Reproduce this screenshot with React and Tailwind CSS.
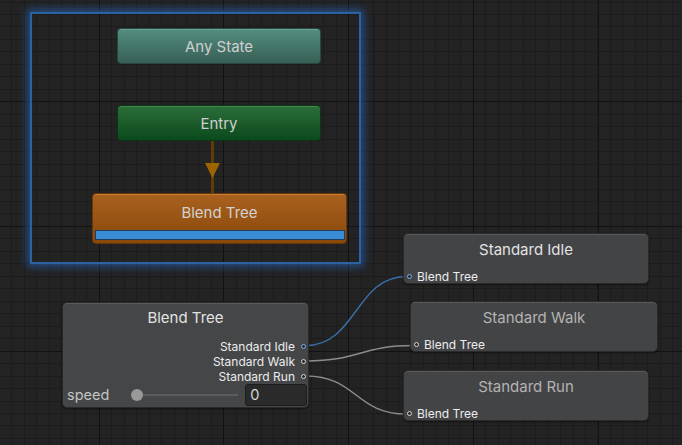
import React from 'react';

const MINOR = 12.47;
const MAJOR = 124.7;

function GridBackdrop() {
  const lines = [];
  // minor lines
  for (let x = 11.4; x < 682; x += MINOR) {
    lines.push(<rect key={`vx${x}`} x={Math.round(x)} y={0} width={1} height={445} fill="#1c1c1c" />);
  }
  for (let y = 1.5; y < 445; y += MINOR) {
    lines.push(<rect key={`hy${y}`} x={0} y={Math.round(y)} width={682} height={1} fill="#1c1c1c" />);
  }
  // major lines
  for (let x = 98.7 - MAJOR; x < 682; x += MAJOR) {
    lines.push(<rect key={`VX${x}`} x={Math.round(x)} y={0} width={1} height={445} fill="#121212" />);
  }
  for (let y = 101.3 - MAJOR; y < 445; y += MAJOR) {
    lines.push(<rect key={`HY${y}`} x={0} y={Math.round(y)} width={682} height={1} fill="#121212" />);
  }
  return (
    <svg className="absolute inset-0" width="682" height="445">
      {lines}
    </svg>
  );
}

function curve(x1, y1, x2, y2) {
  const dx = (x2 - x1) / 2;
  return `M${x1} ${y1} C${x1 + dx} ${y1} ${x2 - dx} ${y2} ${x2} ${y2}`;
}

function Wires() {
  return (
    <svg className="absolute inset-0 pointer-events-none" width="682" height="445">
      <path d={curve(306, 345.5, 406, 276.5)} stroke="#3b6ea6" strokeWidth="1.5" fill="none" />
      <path d={curve(306, 361, 414, 345.5)} stroke="#8c8c8c" strokeWidth="1.5" fill="none" />
      <path d={curve(306, 376, 406, 414)} stroke="#8c8c8c" strokeWidth="1.5" fill="none" />
    </svg>
  );
}

function Port({ blue = false }) {
  return (
    <span
      className={`block w-[5px] h-[5px] rounded-full border bg-[#2a2a2a] shrink-0 ${
        blue ? 'border-[#7fb0e6]' : 'border-[#d6d6d6]'
      }`}
    />
  );
}

function StateNode({ title, className, textClass = 'text-[#cfcfcf]' }) {
  return (
    <div
      className={`absolute flex items-center justify-center pt-[2px] rounded-[4px] text-[15px] ${textClass} ${className}`}
    >
      {title}
    </div>
  );
}

function ClipNode({ title, left, top, width, height, dim = false, blue = false }) {
  return (
    <div
      className="absolute flex flex-col rounded-[5px] bg-[#434446] border border-[#2a2a2b] shadow-[inset_0_1px_0_#58595b,0_1px_2px_rgba(0,0,0,0.5)]"
      style={{ left, top, width, height }}
    >
      <div
        className={`h-[33px] flex items-center justify-center text-[15px] ${
          dim ? 'text-[#b3b3b3]' : 'text-[#e2e2e2]'
        }`}
      >
        {title}
      </div>
      <div className="flex-1" />
      <div className="h-[13px] flex items-center gap-[5px] pl-[3px] text-[12px] text-[#ededed]">
        <Port blue={blue} />
        <span>Blend Tree</span>
      </div>
    </div>
  );
}

export default function App() {
  return (
    <div
      className="relative w-[682px] h-[445px] overflow-hidden bg-[#232323] select-none"
      style={{ fontFamily: 'Inter, "Noto Sans", "Liberation Sans", sans-serif' }}
    >
      <GridBackdrop />

      {/* selected group */}
      <div className="absolute left-[30px] top-[12px] w-[331px] h-[252px] border-2 border-[#2c62a2] shadow-[0_0_8px_3px_rgba(38,100,180,0.65)]" />

      <StateNode
        title="Any State"
        className="left-[117px] top-[28px] w-[204px] h-[36px] bg-gradient-to-b from-[#538e80] to-[#385f56] border border-[#2b4640] shadow-[inset_0_1px_0_#6aa394]"
      />
      <StateNode
        title="Entry"
        className="left-[117px] top-[105px] w-[204px] h-[36px] bg-gradient-to-b from-[#2b6e3a] to-[#0a4a1c] border border-[#0c3315] shadow-[inset_0_1px_0_#3f8a4f]"
      />

      {/* transition arrow */}
      <div className="absolute left-[211px] top-[141px] w-[3px] h-[53px] bg-[#5e3d08]" />
      <svg className="absolute left-[204px] top-[163px]" width="17" height="16">
        <polygon points="1,0 16,0 8.5,15" fill="#9b6400" />
      </svg>

      {/* orange blend tree state */}
      <div className="absolute left-[92px] top-[193px] w-[255px] h-[51px] flex flex-col rounded-[4px] bg-gradient-to-b from-[#aa611e] to-[#874809] border border-[#6a3806] shadow-[inset_0_1px_0_#c77c38]">
        <div className="h-[36px] pt-[2px] flex items-center justify-center text-[15px] text-[#d2d2d2]">
          Blend Tree
        </div>
        <div className="ml-[2px] mr-[1px] h-[10px] bg-[#3a8dd5] border border-[#1e3f60]" />
      </div>

      <Wires />

      {/* blend tree node */}
      <div className="absolute left-[62px] top-[302px] w-[247px] h-[106px] flex flex-col rounded-[5px] bg-[#454648] border border-[#2a2a2b] shadow-[inset_0_1px_0_#5a5b5d,0_1px_2px_rgba(0,0,0,0.5)]">
        <div className="h-[31px] flex items-center justify-center text-[15px] text-[#e2e2e2]">
          Blend Tree
        </div>
        <div className="mt-[5px] flex flex-col items-end pr-[2px] text-[12px] text-[#ececec] leading-[15px]">
          {[
            ['Standard Idle', true],
            ['Standard Walk', false],
            ['Standard Run', false],
          ].map(([label, blue]) => (
            <div key={label} className="flex items-center gap-[6px] h-[15px]">
              <span>{label}</span>
              <Port blue={blue} />
            </div>
          ))}
        </div>
        <div className="h-[22px] flex items-center pl-[4px] pr-[1px]">
          <span className="w-[66px] text-[14.5px] text-[#c4c4c4]">speed</span>
          <div className="relative w-[106px] h-[2px] bg-[#5c5c5c]">
            <span className="absolute left-[-2px] top-[-5px] w-[12px] h-[12px] rounded-full bg-[#999999]" />
          </div>
          <div className="ml-[7px] w-[62px] h-[22px] flex items-center pl-[4px] rounded-[3px] bg-[#2a2a2a] border border-[#1c1c1c] text-[14.5px] text-[#d6d6d6]">
            0
          </div>
        </div>
      </div>

      <ClipNode title="Standard Idle" left={403} top={233} width={246} height={51} blue />
      <ClipNode title="Standard Walk" left={410} top={301} width={248} height={51} dim />
      <ClipNode title="Standard Run" left={403} top={370} width={246} height={51} dim />
    </div>
  );
}
